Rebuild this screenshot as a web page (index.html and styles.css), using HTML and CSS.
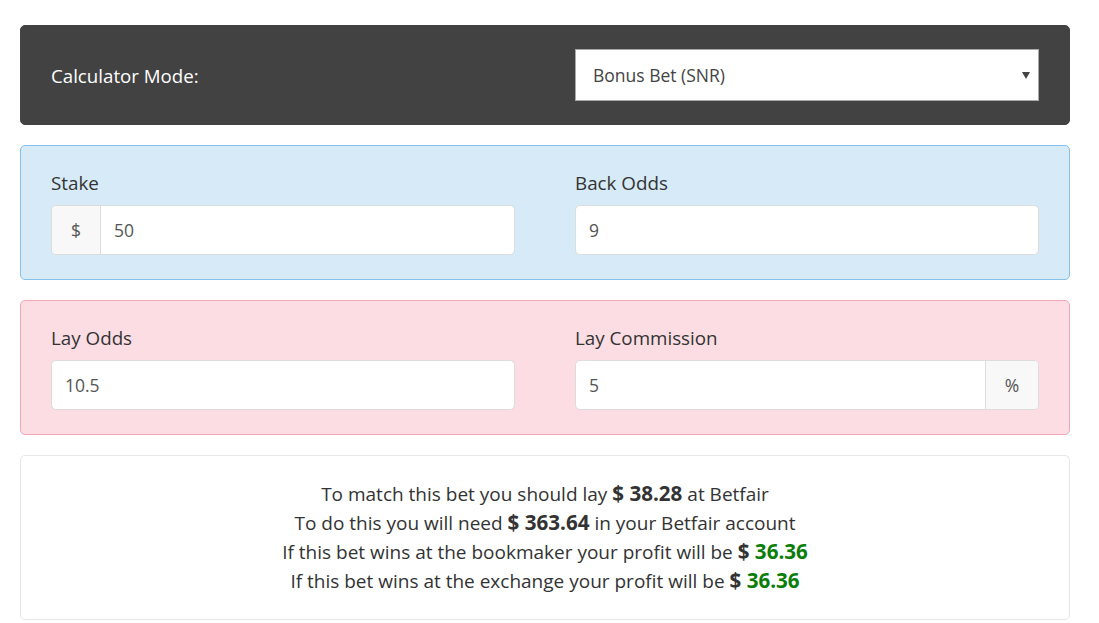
FILE: index.html
```html
<!DOCTYPE html>
<html lang="en">
<head>
    <meta charset="UTF-8">
    <meta name="viewport" content="width=device-width, initial-scale=1.0">
    <title>Matched Betting Calculator</title>
    <link rel="stylesheet" href="styles.css">
</head>
<body>
    <div class="container">
        <div class="panel panel-mode">
            <label class="mode-label" for="mode">Calculator Mode:</label>
            <div class="select-wrap">
                <select id="mode">
                    <option value="snr">Bonus Bet (SNR)</option>
                    <option value="sr">Bonus Bet (SR)</option>
                    <option value="normal">Normal</option>
                </select>
            </div>
        </div>

        <div class="panel panel-back">
            <div class="field">
                <label for="stake">Stake</label>
                <div class="input-group">
                    <span class="addon addon-left">$</span>
                    <input id="stake" type="number" value="50">
                </div>
            </div>
            <div class="field">
                <label for="backOdds">Back Odds</label>
                <div class="input-group">
                    <input id="backOdds" type="number" value="9">
                </div>
            </div>
        </div>

        <div class="panel panel-lay">
            <div class="field">
                <label for="layOdds">Lay Odds</label>
                <div class="input-group">
                    <input id="layOdds" type="number" value="10.5">
                </div>
            </div>
            <div class="field">
                <label for="commission">Lay Commission</label>
                <div class="input-group">
                    <input id="commission" type="number" value="5">
                    <span class="addon addon-right">%</span>
                </div>
            </div>
        </div>

        <div class="panel panel-result">
            <p>To match this bet you should lay <strong>$ 38.28</strong> at Betfair</p>
            <p>To do this you will need <strong>$ 363.64</strong> in your Betfair account</p>
            <p>If this bet wins at the bookmaker your profit will be <strong>$ <span class="profit">36.36</span></strong></p>
            <p>If this bet wins at the exchange your profit will be <strong>$ <span class="profit">36.36</span></strong></p>
        </div>
    </div>
</body>
</html>
```

FILE: styles.css
```css
body {
    font-family: 'Open Sans', sans-serif;
    background-color: #ffffff;
    color: #333;
    margin: 0;
}
.container {
    width: 1050px;
    padding: 25px 0 0 20px;
    display: flex;
    flex-direction: column;
    gap: 20px;
}
.panel {
    border: 1px solid transparent;
    border-radius: 5px;
    box-sizing: border-box;
}
.panel-mode {
    height: 100px;
    background-color: #424242;
    border-color: #424242;
    display: flex;
    align-items: center;
    padding: 0 30px;
}
.mode-label {
    flex: 1;
    color: #fff;
    font-size: 18.7px;
}
.select-wrap {
    position: relative;
    width: 464px;
}
.select-wrap::after {
    content: "";
    position: absolute;
    right: 9px;
    top: 23px;
    border-left: 4px solid transparent;
    border-right: 4px solid transparent;
    border-top: 7px solid #444;
}
select {
    width: 100%;
    height: 52px;
    appearance: none;
    -webkit-appearance: none;
    background: #fff;
    border: 1px solid #aaa;
    border-radius: 0;
    padding: 0 17px;
    font-family: 'Open Sans', sans-serif;
    font-size: 17.5px;
    color: #444;
}
.panel-back,
.panel-lay {
    display: grid;
    grid-template-columns: 1fr 1fr;
    column-gap: 60px;
    padding: 25px 30px 24px 30px;
}
.panel-back {
    background-color: #d6eaf8;
    border-color: #85c1ec;
}
.panel-lay {
    background-color: #fbdde3;
    border-color: #f3a8b6;
}
.field label {
    display: block;
    font-size: 18.8px;
    line-height: 25px;
    margin-bottom: 9px;
    color: #333;
}
.input-group {
    display: flex;
    height: 50px;
    border: 1px solid #dcdcdc;
    border-radius: 5px;
    background: #fff;
    box-sizing: border-box;
    overflow: hidden;
}
.input-group input {
    flex: 1;
    min-width: 0;
    border: none;
    outline: none;
    padding: 0 13px;
    font-family: 'Open Sans', sans-serif;
    font-size: 17.5px;
    color: #555;
    background: transparent;
    -moz-appearance: textfield;
}
.input-group input::-webkit-inner-spin-button,
.input-group input::-webkit-outer-spin-button {
    -webkit-appearance: none;
    margin: 0;
}
.addon {
    display: flex;
    align-items: center;
    justify-content: center;
    background: #f8f8f8;
    font-size: 17.5px;
    color: #555;
}
.addon-left {
    width: 48px;
    border-right: 1px solid #dcdcdc;
}
.addon-right {
    width: 52px;
    border-left: 1px solid #dcdcdc;
}
.panel-result {
    border-color: #e6e6e6;
    padding: 24px 20px 23px;
    text-align: center;
    font-size: 19px;
    line-height: 29px;
}
.panel-result p {
    margin: 0;
}
.panel-result strong {
    font-weight: 700;
    font-size: 20.6px;
    line-height: 1;
}
.profit {
    color: #0a7d0a;
}
```
